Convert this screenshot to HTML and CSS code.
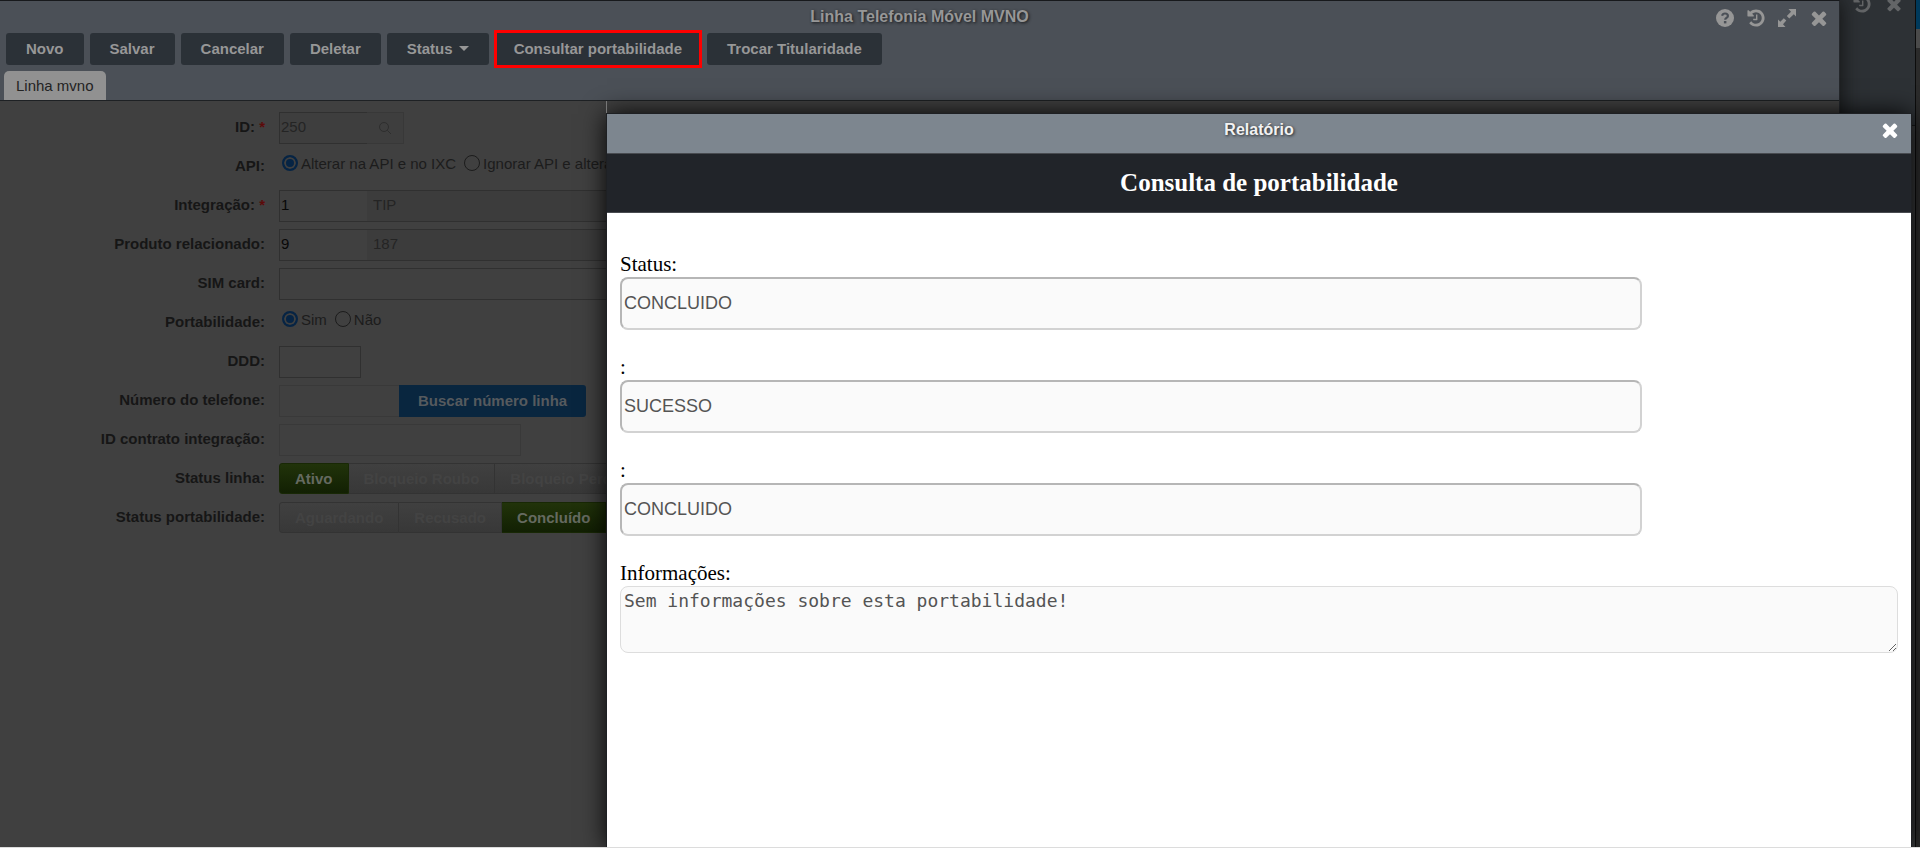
FILE: index.html
```html
<!DOCTYPE html>
<html lang="pt-BR">
<head>
<meta charset="utf-8">
<title>Linha Telefonia Móvel MVNO</title>
<link rel="stylesheet" href="styles.css">
</head>
<body>
<svg class="sprite" aria-hidden="true">
  <symbol id="i-times" viewBox="0 0 1792 1792"><path d="M1490 1322q0 40-28 68l-136 136q-28 28-68 28t-68-28l-294-294-294 294q-28 28-68 28t-68-28l-136-136q-28-28-28-68t28-68l294-294-294-294q-28-28-28-68t28-68l136-136q28-28 68-28t68 28l294 294 294-294q28-28 68-28t68 28l136 136q28 28 28 68t-28 68l-294 294 294 294q28 28 28 68z"/></symbol>
  <symbol id="i-history" viewBox="0 0 1792 1792"><path d="M1664 896q0 156-61 298t-164 245-245 164-298 61q-172 0-327-72.500t-264-204.500q-7-10-6.500-22.500t8.500-20.500l137-138q10-9 25-9 16 2 23 12 73 95 179 147t225 52q104 0 198.500-40.500t163.500-109.500 109.500-163.500 40.500-198.500-40.500-198.500-109.500-163.500-163.500-109.500-198.500-40.500q-98 0-188 35.500t-160 101.500l137 138q31 30 14 69-17 40-59 40h-448q-26 0-45-19t-19-45v-448q0-42 40-59 39-17 69 14l130 129q107-101 244.500-156.500t284.500-55.500q156 0 298 61t245 164 164 245 61 298zm-640-288v448q0 14-9 23t-23 9h-320q-14 0-23-9t-9-23v-64q0-14 9-23t23-9h224v-352q0-14 9-23t23-9h64q14 0 23 9t9 23z"/></symbol>
  <symbol id="i-help" viewBox="0 0 20 20"><circle cx="10" cy="10" r="9"/><path d="M7.100 7.800C7.500 6.200 8.500 5.500 10 5.500c1.700 0 2.900 1 2.900 2.400 0 2-2.700 2-2.700 3.800" fill="none" stroke="#4b5057" stroke-width="2.200"/><rect x="8.900" y="13" width="2.500" height="2.400" fill="#4b5057"/></symbol>
  <symbol id="i-expand" viewBox="0 0 20 20"><path d="M11.500 1H19v7.500L16.800 6.200 12.300 10.400 9.800 8 14 3.700zM8.500 19H1v-7.500l2.300 2.300 3.500-3.600 2.500 2.400L6 16.300z"/></symbol>
</svg>

<div class="desktop">
  <section class="window back" aria-hidden="true">
    <div class="back-head">
      <svg class="icon"><use href="#i-help"/></svg>
      <svg class="icon"><use href="#i-history"/></svg>
      <svg class="icon"><use href="#i-times"/></svg>
    </div>
  </section>
  <div class="scroll-edge"></div>

  <section class="window main">
    <header class="head">
      <h1 class="title">Linha Telefonia Móvel MVNO</h1>
      <div class="tools">
        <button type="button" aria-label="Ajuda"><svg class="icon"><use href="#i-help"/></svg></button>
        <button type="button" aria-label="Histórico"><svg class="icon"><use href="#i-history"/></svg></button>
        <button type="button" aria-label="Expandir"><svg class="icon"><use href="#i-expand"/></svg></button>
        <button type="button" aria-label="Fechar"><svg class="icon times"><use href="#i-times"/></svg></button>
      </div>
      <div class="actions">
        <button type="button" class="btn">Novo</button>
        <button type="button" class="btn">Salvar</button>
        <button type="button" class="btn">Cancelar</button>
        <button type="button" class="btn">Deletar</button>
        <button type="button" class="btn">Status <span class="caret"></span></button>
        <button type="button" class="btn marked">Consultar portabilidade</button>
        <button type="button" class="btn">Trocar Titularidade</button>
      </div>
      <nav class="tabs"><button type="button" class="tab">Linha mvno</button></nav>
    </header>

    <form class="form">
      <label class="label" for="id">ID: <b class="req">*</b></label>
      <div class="control">
        <input class="text short dim" id="id" value="250" readonly>
        <button type="button" class="search" aria-label="Buscar"><svg class="lens" viewBox="0 0 14 14"><circle cx="6" cy="6" r="4.500"/><path d="M9.300 9.300 13 13"/></svg></button>
      </div>

      <span class="label">API:</span>
      <div class="control radios">
        <label class="radio"><input type="radio" name="api" checked>Alterar na API e no IXC</label>
        <label class="radio"><input type="radio" name="api">Ignorar API e alterar no IXC</label>
      </div>

      <label class="label" for="integ">Integração: <b class="req">*</b></label>
      <div class="control">
        <input class="text short" id="integ" value="1">
        <input class="text desc" aria-label="Descrição da integração" value="TIP" readonly>
      </div>

      <label class="label" for="prod">Produto relacionado:</label>
      <div class="control">
        <input class="text short" id="prod" value="9">
        <input class="text desc" aria-label="Descrição do produto" value="187" readonly>
      </div>

      <label class="label" for="sim">SIM card:</label>
      <div class="control"><input class="text wide" id="sim"></div>

      <span class="label">Portabilidade:</span>
      <div class="control radios">
        <label class="radio"><input type="radio" name="port" checked>Sim</label>
        <label class="radio"><input type="radio" name="port">Não</label>
      </div>

      <label class="label" for="ddd">DDD:</label>
      <div class="control"><input class="text ddd" id="ddd"></div>

      <label class="label" for="tel">Número do telefone:</label>
      <div class="control">
        <input class="text tel faint" id="tel" readonly>
        <button type="button" class="blue">Buscar número linha</button>
      </div>

      <label class="label" for="contrato">ID contrato integração:</label>
      <div class="control"><input class="text contract faint" id="contrato" readonly></div>

      <span class="label">Status linha:</span>
      <div class="control segments">
        <button type="button" class="seg on">Ativo</button>
        <button type="button" class="seg">Bloqueio Roubo</button>
        <button type="button" class="seg">Bloqueio Perda</button>
      </div>

      <span class="label">Status portabilidade:</span>
      <div class="control segments">
        <button type="button" class="seg">Aguardando</button>
        <button type="button" class="seg">Recusado</button>
        <button type="button" class="seg on">Concluído</button>
      </div>
    </form>
  </section>

  <section class="window report" role="dialog" aria-labelledby="rel">
    <header class="report-head">
      <h2 class="report-title" id="rel">Relatório</h2>
      <button type="button" class="close" aria-label="Fechar relatório"><svg class="icon"><use href="#i-times"/></svg></button>
    </header>
    <h3 class="banner">Consulta de portabilidade</h3>
    <div class="report-body">
      <div class="field"><label for="f1">Status:</label><input id="f1" value="CONCLUIDO" readonly></div>
      <div class="field"><label for="f2">:</label><input id="f2" value="SUCESSO" readonly></div>
      <div class="field"><label for="f3">:</label><input id="f3" value="CONCLUIDO" readonly></div>
      <div class="field"><label for="f4">Informações:</label><textarea id="f4" readonly>Sem informações sobre esta portabilidade!</textarea></div>
    </div>
  </section>
</div>
</body>
</html>
```
FILE: styles.css
```css
* { box-sizing: border-box; }

body {
  margin: 0;
  background: #dcdcdc;
  font-family: "Liberation Sans", Arial, sans-serif;
  font-size: 15px;
  color: #1c1c1c;
}

button, input, textarea { font: inherit; margin: 0; }
button { border: 0; padding: 0; background: none; color: inherit; }
h1, h2, h3 { margin: 0; }

.sprite { position: absolute; width: 0; height: 0; }
.icon { display: block; width: 20px; height: 20px; fill: currentColor; }

.desktop {
  position: relative;
  height: calc(100vh - 1px);
  background: #2b2b2b;
  overflow: hidden;
}
.window { position: absolute; bottom: 0; }

/* Window in the background */
.back {
  top: 0;
  left: 0;
  right: 4px;
  background: #383a3c;
  border-right: 1px solid #0c0c0c;
}
.back-head {
  display: flex;
  justify-content: flex-end;
  gap: 12px;
  height: 126px;
  padding-right: 11px;
  background: #2d3135;
  border-bottom: 1px solid #17191b;
  color: #636567;
}
.back-head .icon { margin-top: -6px; }
.scroll-edge {
  position: absolute;
  top: 0;
  right: 0;
  width: 4px;
  height: 48px;
  background: #4a4a4a;
  border-top: 29px solid #003a5c;
}

/* Main window */
.main {
  top: 0;
  left: 0;
  right: 80px;
  background: #404040;
  border-top: 1px solid #17191c;
  border-right: 1px solid #25282c;
  box-shadow: 0 0 20px #101010;
}
.head {
  position: relative;
  display: flex;
  flex-direction: column;
  background: #4b5057;
  border-bottom: 1px solid #1e2124;
}
.title {
  height: 32px;
  padding-top: 7px;
  font-size: 16px;
  line-height: 18px;
  text-align: center;
  color: #979797;
  text-shadow: 1px 1px 3px #17191c;
}
.tools {
  position: absolute;
  top: 6px;
  right: 9px;
  display: flex;
  gap: 11px;
  color: #969696;
}
.actions {
  display: flex;
  gap: 6px;
  padding-left: 6px;
}
.btn {
  display: flex;
  align-items: center;
  gap: 6px;
  height: 32px;
  padding: 0 20px 2px;
  border-radius: 3px;
  background: #2b3137;
  color: #979797;
  font-weight: bold;
}
.marked {
  margin: 0 2px;
  padding: 0 17px 2px;
  border-radius: 0;
  outline: 3px solid #ff0000;
}
.caret {
  border: 5px solid transparent;
  border-top-color: currentColor;
  border-bottom: 0;
}
.tabs { display: flex; padding: 6px 4px 0; }
.tab {
  height: 29px;
  padding: 0 12px;
  border-radius: 5px 5px 0 0;
  background: #919191;
  color: #232323;
}

.form {
  display: grid;
  grid-template-columns: 265px 1fr;
  grid-auto-rows: 39px;
  column-gap: 14px;
  align-items: center;
  padding-top: 7px;
}
.label { padding-bottom: 2px; text-align: right; font-weight: bold; color: #161616; }
.req { color: #5c0a0a; }
.control { display: flex; align-items: center; }
.text {
  height: 32px;
  padding: 0 1px 2px;
  border: 1px solid #303030;
  background: #404040;
  color: #080808;
}
.short { width: 88px; border-right: 0; }
.dim { color: #242424; background: #3e3e3e; }
.desc { flex: 1; padding-left: 6px; border-left: 0; background: #3c3c3c; color: #242424; }
.wide { flex: 1; }
.ddd { width: 82px; }
.tel { width: 120px; border-right: 0; }
.contract { width: 242px; }
.faint { border-color: #393939; background: #404040; }
.search {
  display: flex;
  align-items: center;
  justify-content: center;
  width: 37px;
  height: 32px;
  border: 1px solid #383838;
  border-left: 0;
  background: #3e3e3e;
}
.lens { width: 14px; height: 14px; fill: none; stroke: #2e2e2e; stroke-width: 1; }
.radios { gap: 8px; padding: 0 0 7px 3px; }
.radio { display: flex; align-items: center; gap: 3px; }
.radio input {
  appearance: none;
  width: 16px;
  height: 16px;
  border: 1px solid #1c1c1c;
  border-radius: 50%;
  background: #404040;
}
.radio input:checked {
  border: 2px solid #062444;
  background: #062444;
  box-shadow: inset 0 0 0 2px #404040;
}
.blue {
  height: 32px;
  padding: 0 19px 1px;
  border-radius: 0 3px 3px 0;
  background: #09263f;
  color: #565a5e;
  font-weight: bold;
}
.seg {
  height: 31px;
  padding: 0 15px 1px;
  border: 1px solid #333333;
  border-left-width: 0;
  background: linear-gradient(#404040, #383838);
  color: #434343;
  font-weight: bold;
}
.seg:first-child { border-left-width: 1px; border-radius: 3px 0 0 3px; }
.on {
  border-color: #182805;
  background: linear-gradient(#21330a, #122003);
  color: #656a60;
}

/* Report dialog */
.report {
  top: 114px;
  left: 607px;
  right: 9px;
  bottom: -1px;
  background: #ffffff;
  box-shadow: 0 0 0 1px #1e2023, 0 0 24px #000000;
}
.report::before {
  content: "";
  position: absolute;
  top: -13px;
  left: -1px;
  width: 1px;
  height: 12px;
  background: #777777;
}
.report-head {
  position: relative;
  height: 39px;
  padding-top: 7px;
  background: #7d868f;
}
.report-title {
  font-size: 16px;
  line-height: 18px;
  text-align: center;
  color: #f2f2f2;
  text-shadow: 1px 1px 3px #22262a;
}
.close { position: absolute; top: 5px; right: 10px; color: #ffffff; }
.close .icon, .tools .times { width: 22px; height: 22px; }
.banner {
  height: 60px;
  padding-top: 15px;
  border: solid #484b50;
  border-width: 1px 0;
  background: #212429;
  color: #ffffff;
  font: bold 25px/28px "Liberation Serif", "Times New Roman", serif;
  text-align: center;
}
.report-body {
  display: grid;
  gap: 26px;
  padding: 40px 13px;
}
.field {
  display: flex;
  flex-direction: column;
  align-items: flex-start;
  color: #000000;
}
.field label {
  padding-bottom: 2px;
  font: 21px/22px "Liberation Serif", "Times New Roman", serif;
}
.field input {
  width: 80%;
  height: 53px;
  padding: 0 2px;
  border: 2px solid;
  border-color: #b6b6b6 #d2d2d2 #d2d2d2 #b6b6b6;
  border-radius: 8px;
  background: #fafafa;
  color: #545454;
  font-size: 18px;
}
.field textarea {
  width: 100%;
  height: 67px;
  padding: 3px;
  border: 1px solid #dddddd;
  border-radius: 8px;
  background: #fafafa;
  color: #545454;
  font: 18px/22px "DejaVu Sans Mono", monospace;
}
```
